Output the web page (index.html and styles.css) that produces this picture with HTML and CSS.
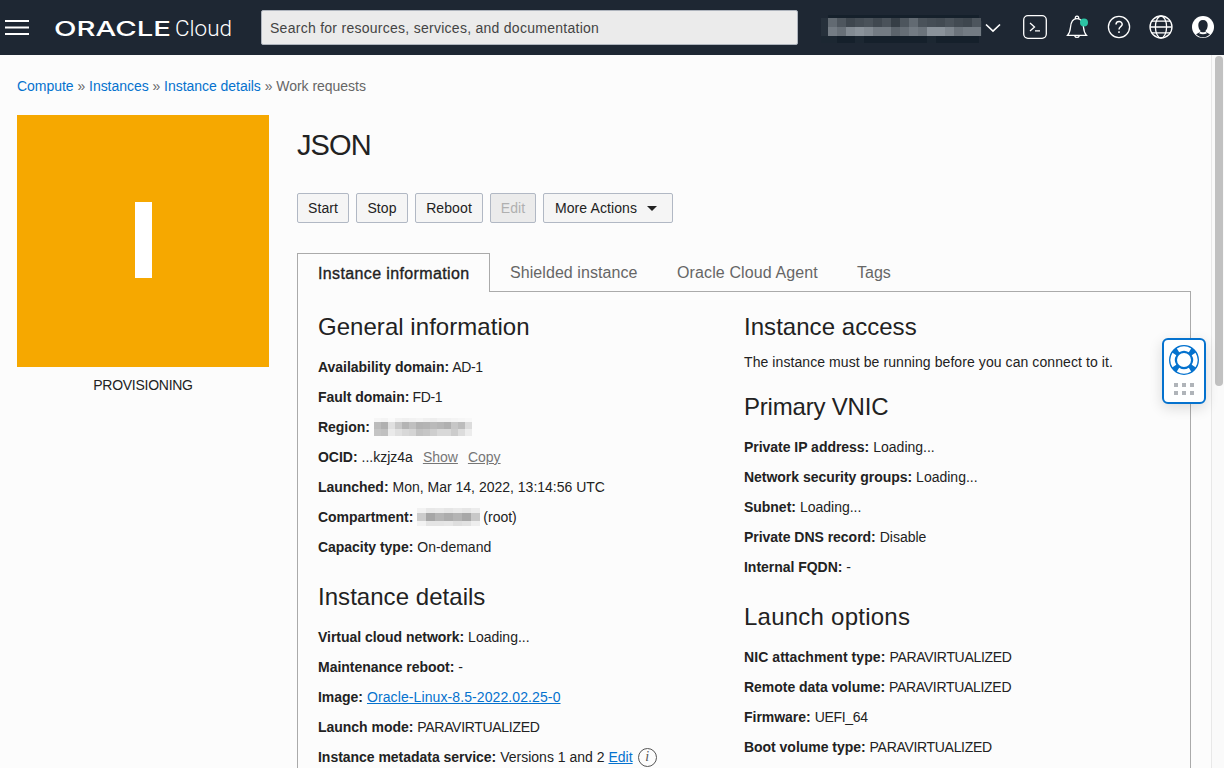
FILE: index.html
```html
<!DOCTYPE html>
<html lang="en">
<head>
<meta charset="utf-8">
<title>Oracle Cloud</title>
<link rel="stylesheet" href="styles.css">
</head>
<body>
<header class="topbar">
  <svg class="menu" width="24" height="15" viewBox="0 0 24 15"><path d="M0 1h24M0 7.5h24M0 14h24" stroke="#fff" stroke-width="1.8"/></svg>
  <svg class="logo" width="178" height="24" viewBox="0 0 178 24">
    <text class="logo-oracle" x="-1" y="20" textLength="117" lengthAdjust="spacingAndGlyphs">ORACLE</text>
    <text class="logo-cloud" x="120" y="20" textLength="57" lengthAdjust="spacingAndGlyphs">Cloud</text>
  </svg>
  <div class="search">Search for resources, services, and documentation</div>
  <svg class="account" width="162" height="28" viewBox="0 0 162 28" shape-rendering="crispEdges">
    <path fill="#26303b" d="M0 3h7v18H0zM153 6h8v15h-8z"/><path fill="#15202b" d="M7 0h151v3H7zM7 21h151v7H7z"/><path fill="#1c2732" d="M0 21h16v7H0zM34 21h9v7h-9zM106 21h9v7h-9z"/>
    <g id="account-cells"></g>
  </svg>
  <svg class="chevron" width="16" height="10" viewBox="0 0 16 10"><path d="M1 1.5l7 6.7 7-6.7" fill="none" stroke="#fff" stroke-width="1.6"/></svg>
  <svg class="ico ico-shell" width="24" height="24" viewBox="0 0 24 24"><rect x=".7" y=".7" width="22.6" height="22.6" rx="4.2"/><path d="M7 8l4.5 4L7 16M12 15.9h5"/></svg>
  <svg class="ico ico-bell" width="24" height="24" viewBox="0 0 24 24"><path d="M2.5 20.4c2.2-2.4 2.6-4 3-8.1.4-5 2.4-8.6 6.5-8.6s6.1 3.6 6.5 8.6c.4 4.1.8 5.7 3 8.1zM10.5 3.6a1.7 1.7 0 1 1 3 0M9.7 20.7a2.4 2.4 0 0 0 4.6 0"/><circle cx="19" cy="7.5" r="4" class="dot"/></svg>
  <svg class="ico ico-help" width="24" height="24" viewBox="0 0 24 24"><circle cx="12" cy="12" r="10.6"/><path d="M9 9.6c0-4 6.200-4 6.200-.3 0 2.500-3.200 2.200-3.200 5.200M12 16.300v1.700" stroke-width="1.5"/></svg>
  <svg class="ico ico-globe" width="24" height="24" viewBox="0 0 24 24"><circle cx="12" cy="12" r="11"/><ellipse cx="12" cy="12" rx="5.6" ry="11"/><path d="M1 12h22M3 6.200h18M3 17.800h18"/></svg>
  <svg class="ico ico-user" width="24" height="24" viewBox="0 0 24 24"><circle cx="12" cy="12" r="11" fill="#fff" stroke="none"/><path d="M12 5c3 0 4.700 2 4.700 5 0 2.500-.9 4.700-2.200 5.800.6 2 2.300 2.200 4.500 3.400C17 21.300 14.700 22.300 12 22.300S7 21.300 5 19.200c2.200-1.200 3.900-1.400 4.500-3.400C8.200 14.700 7.300 12.500 7.300 10c0-3 1.700-5 4.700-5z" fill="#1e2733" stroke="none"/><path d="M9.500 16.500Q12 18.200 14.500 16.500l1.500 1.700q-4 2.200-8 0z" fill="#fff" stroke="none"/></svg>
</header>
<div class="viewport">
  <main class="content">
    <nav class="crumbs"><a>Compute</a> » <a>Instances</a> » <a>Instance details</a> » Work requests</nav>
    <div class="columns">
      <aside class="status">
        <div class="tile"><div class="tile-mark"></div></div>
        <div class="state">PROVISIONING</div>
      </aside>
      <section class="detail">
        <h1>JSON</h1>
        <div class="buttons">
          <button class="b-start">Start</button><button class="b-stop">Stop</button><button class="b-reboot">Reboot</button><button class="b-edit" disabled>Edit</button><button class="b-more">More Actions<i class="caret"></i></button>
        </div>
        <div class="tabs">
          <div class="tab active"><span>Instance information</span></div>
          <div class="tab t-shield">Shielded instance</div>
          <div class="tab t-agent">Oracle Cloud Agent</div>
          <div class="tab t-tags">Tags</div>
        </div>
        <div class="panel">
          <div class="col">
            <h2>General information</h2>
            <p><b>Availability domain:</b> <span class="code">AD-1</span></p>
            <p><b>Fault domain:</b> <span class="code">FD-1</span></p>
            <p><b>Region:</b> <svg class="mosaic" width="105" height="18" viewBox="0 0 105 18" shape-rendering="crispEdges"><g id="region-cells"></g></svg></p>
            <p><b>OCID:</b> ...kzjz4a <a class="muted">Show</a> <a class="muted">Copy</a></p>
            <p><b>Launched:</b> Mon, Mar 14, 2022, 13:14:56 UTC</p>
            <p><b>Compartment:</b> <svg class="mosaic" width="63" height="18" viewBox="0 0 63 18" shape-rendering="crispEdges"><g id="compartment-cells"></g></svg><span class="root">(root)</span></p>
            <p><b>Capacity type:</b> On-demand</p>
            <h2>Instance details</h2>
            <p><b>Virtual cloud network:</b> Loading...</p>
            <p><b>Maintenance reboot:</b> -</p>
            <p><b>Image:</b> <a class="image">Oracle-Linux-8.5-2022.02.25-0</a></p>
            <p><b>Launch mode:</b> <span class="caps">PARAVIRTUALIZED</span></p>
            <p class="last"><b>Instance metadata service:</b> Versions 1 and 2 <a>Edit</a><span class="info">i</span></p>
          </div>
          <div class="col">
            <h2>Instance access</h2>
            <p class="note">The instance must be running before you can connect to it.</p>
            <h2 class="vnic">Primary VNIC</h2>
            <p><b>Private IP address:</b> Loading...</p>
            <p><b>Network security groups:</b> Loading...</p>
            <p><b>Subnet:</b> Loading...</p>
            <p><b>Private DNS record:</b> Disable</p>
            <p><b>Internal FQDN:</b> -</p>
            <h2 class="launch">Launch options</h2>
            <p><b class="nic">NIC attachment type:</b> <span class="caps">PARAVIRTUALIZED</span></p>
            <p><b>Remote data volume:</b> <span class="caps">PARAVIRTUALIZED</span></p>
            <p><b>Firmware:</b> <span class="caps">UEFI_64</span></p>
            <p class="last"><b>Boot volume type:</b> <span class="caps">PARAVIRTUALIZED</span></p>
          </div>
        </div>
      </section>
    </div>
  </main>
  <div class="track"><div class="thumb"></div></div>
</div>
<div class="support">
  <svg width="30" height="30" viewBox="0 0 30 30"><circle cx="15" cy="15" r="11" fill="none" stroke="#0572ce" stroke-width="8"/><g fill="none" stroke="#fff" stroke-width="4.4"><path d="M9 5.400a11.300 11.300 0 0 1 12 0M24.600 9a11.300 11.300 0 0 1 0 12M21 24.600a11.300 11.300 0 0 1-12 0M5.400 21a11.300 11.300 0 0 1 0-12"/></g></svg>
  <div class="grip"><i></i><i></i><i></i><i></i><i></i><i></i></div>
</div>
<script src="mosaic.js"></script>
</body>
</html>
```
FILE: styles.css
```css
* { box-sizing: border-box; }
body { margin: 0; height: 768px; overflow: hidden; display: flex; flex-direction: column; background: #fcfcfc; color: #222; font: 14px/20px "Liberation Sans", Arial, sans-serif; }
svg { display: block; flex: none; }
a { color: #0572ce; }
.topbar { height: 55px; flex: none; padding-bottom: 1px; background: #1e2733; display: flex; align-items: center; }
.menu { margin-left: 5px; }
.logo { margin-left: 26px; margin-top: 1px; overflow: visible; }
.logo text { fill: #fff; }
.logo-oracle { font: 500 20.5px "Inter", sans-serif; }
.logo-cloud { font: 300 22px "Roboto", sans-serif; }
.search { width: 537px; height: 35px; margin: 1px 0 0 28px; flex: none; background: #ebebeb; border: 1px solid #aeb4bd; border-radius: 2px; padding: 1px 8px 0; line-height: 33px; color: #444; letter-spacing: .27px; }
.account { margin: 3px 0 0 23px; }
.chevron { margin: 1px 0 0 2px; }
.ico { fill: none; stroke: #fff; stroke-width: 1.3; }
.ico .dot { fill: #2cc4a4; stroke: none; }
.ico-shell { margin-left: 22px; }
.ico-bell, .ico-help, .ico-globe, .ico-user { margin-left: 18px; }
.viewport { flex: 1; min-height: 0; display: flex; overflow: hidden; }
.content { width: 1211px; flex: none; padding-left: 17px; }
.crumbs { margin-top: 21px; color: #666; white-space: nowrap; letter-spacing: -.035px; }
.columns { display: flex; margin-top: 19px; }
.status { width: 252px; }
.tile { height: 252px; background: #f6a800; display: flex; align-items: center; justify-content: center; }
.tile-mark { width: 17px; height: 76px; margin-bottom: 2px; background: #fff; }
.state { text-align: center; margin-top: 8px; letter-spacing: -.27px; }
.detail { width: 894px; margin-left: 28px; }
h1, h2 { font-weight: 400; margin: 0; }
h1 { font-size: 29px; line-height: 36px; margin-top: 12px; letter-spacing: -.9px; }
.buttons { display: flex; gap: 7px; margin-top: 30px; }
button { height: 30px; padding: 0; border: 1px solid #b1b8c4; border-radius: 2px; background: #f5f5f5; color: #222; font: inherit; letter-spacing: .1px; display: flex; align-items: center; justify-content: center; }
button:disabled { background: #ebebeb; color: #b0b0b0; }
.b-start, .b-stop { width: 52px; }
.b-reboot { width: 68px; }
.b-edit { width: 46px; }
.b-more { width: 130px; }
.caret { border: 5px solid transparent; border-top-color: #222; border-bottom: 0; margin: 1px 4px 0 10px; }
.tabs { display: flex; margin-top: 30px; height: 39px; font-size: 16px; color: #666; line-height: 40px; white-space: nowrap; }
.active { width: 193px; border: 1px solid #aaa; border-bottom: 0; padding-left: 20px; color: #222; -webkit-text-stroke: .35px #222; letter-spacing: .37px; }
.t-shield { width: 168px; padding-left: 20px; letter-spacing: .07px; }
.t-agent { width: 180px; padding-left: 19px; letter-spacing: .12px; }
.t-tags { flex: 1; padding-left: 19px; }
.tab:not(.active) { border-bottom: 1px solid #aaa; }
.panel { height: 476px; border: 1px solid #aaa; border-width: 0 1px; padding: 20px 0 0 20px; display: flex; }
.col { width: 426px; flex: none; white-space: nowrap; }
.col + .col { width: 440px; }
h2 { font-size: 24px; line-height: 30px; margin: 20px 0 10px; letter-spacing: .04px; }
h2:first-child { margin-top: 0; }
.vnic { letter-spacing: -.2px; }
.launch { letter-spacing: .24px; }
p { margin: 0; height: 30px; line-height: 30px; display: flex; align-items: center; }
p.last { height: 26px; }
.last > * { flex: none; }
p b { margin-right: 4px; letter-spacing: -.03px; }
p .nic { letter-spacing: .07px; }
p > a { text-decoration: underline; }
p .muted { color: #767676; margin-left: 10px; }
p .image { letter-spacing: .1px; }
.code { letter-spacing: -.3px; margin-left: -1px; }
.caps { letter-spacing: -.31px; }
p.note { height: 20px; line-height: 20px; letter-spacing: .08px; }
.root { margin-left: 3px; }
p a:has(+ .info) { margin-left: 4px; }
.info { width: 19px; height: 19px; margin-left: 5px; border: 1px solid #555; border-radius: 50%; color: #555; font: italic 14px/16px "Liberation Serif", serif; text-align: center; }
.last { padding-top: 4px; overflow: visible; }
p.last { align-items: center; padding-top: 0; line-height: 30px; height: 30px; margin-bottom: -4px; }
.track { flex: 1; border-left: 1px solid #e8e8e8; background: #fafafa; }
.thumb { width: 8px; height: 330px; margin: 1px 0 0 3px; border-radius: 4px; background: #c1c1c1; }
.support { position: absolute; left: 1162px; top: 338px; width: 44px; height: 66px; background: #fff; border: 2px solid #0572ce; border-radius: 6px; box-shadow: 0 4px 14px rgba(0,0,0,.14); padding: 5px 5px 0; }
.grip { display: grid; grid-template-columns: repeat(3, 4px); gap: 4px; margin: 8px 0 0 5px; }
.grip i { width: 4px; height: 4px; background: #b0b4b9; }
```
FILE: mosaic.js
```js
// Paints masked values as rows of flat cells; each cell is a two-digit hex shade.
function paint(id, x, y, w, heights, rows, tint) {
  const group = document.getElementById(id);
  rows.forEach((row, r) => {
    row.split(" ").forEach((v, c) => {
      const n = parseInt(v, 16);
      const cell = document.createElementNS("http://www.w3.org/2000/svg", "rect");
      cell.setAttribute("x", x + c * w);
      cell.setAttribute("y", y);
      cell.setAttribute("width", w);
      cell.setAttribute("height", heights[r]);
      cell.setAttribute("fill", `rgb(${n - tint},${n},${n + tint})`);
      group.appendChild(cell);
    });
    y += heights[r];
  });
}
paint("account-cells", 7, 3, 9, [9, 9], [
  "6a 56 46 4d 52 48 52 3e 55 6a 52 4d 4a 52 4a 46 55",
  "7c 70 8a 92 8a 7b 7b 64 6e 7b 73 92 92 86 73 7b 7b"
], 8);
paint("region-cells", 0, 0, 7, [4, 7, 7], [
  "f6 f4 fa f2 f0 f2 f4 f0 ee f2 f2 f4 f6 f8 fc",
  "bb b0 e0 c8 b4 c0 b2 b4 ba b6 b0 c6 bc dc fc",
  "c4 c0 ea e0 d8 d4 c2 c6 ce d8 d8 cc dc ec fc"
], 0);
paint("compartment-cells", 0, 0, 9, [5, 8, 5], [
  "f2 e8 ea e6 ea e6 ec",
  "cc a6 b4 ac b4 a8 c8",
  "f2 e4 e4 e6 de e2 ee"
], 0);
```
